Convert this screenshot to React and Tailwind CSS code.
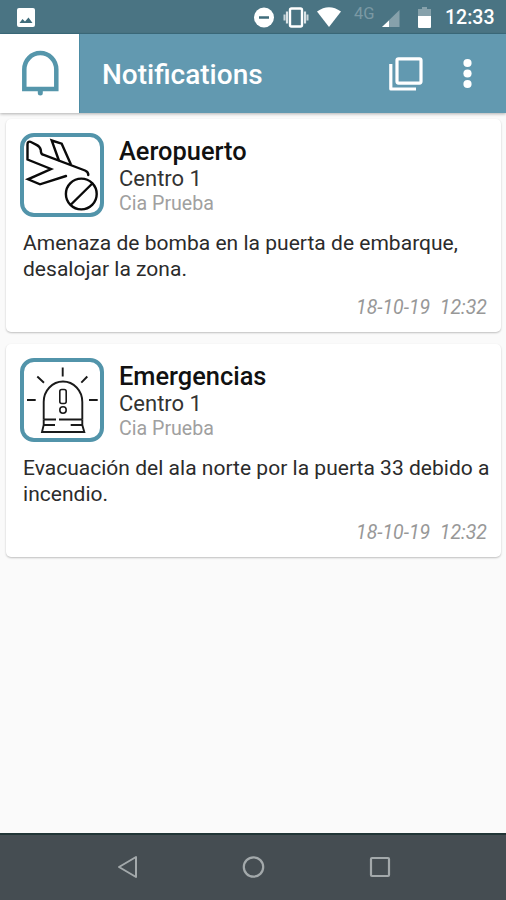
import React from "react";

const notifications = [
  {
    id: 1,
    title: "Aeropuerto",
    center: "Centro 1",
    company: "Cia Prueba",
    message: "Amenaza de bomba en la puerta de embarque, desalojar la zona.",
    date: "18-10-19",
    time: "12:32",
    Icon: PlaneIcon,
  },
  {
    id: 2,
    title: "Emergencias",
    center: "Centro 1",
    company: "Cia Prueba",
    message: "Evacuación del ala norte por la puerta 33 debido a incendio.",
    date: "18-10-19",
    time: "12:32",
    Icon: SirenIcon,
  },
];

function PlaneIcon() {
  return (
    <svg width="76" height="76" viewBox="0 0 76 76" fill="none" stroke="#0a0a0a" strokeWidth="2.4" strokeLinecap="round">
      <path d="M64.3 38 Q64.500 35 61 33.500 L18.500 17.500 Q16.800 17 16.800 13 Q16 9.500 12.500 7.800 L6.500 4.800 Q3.500 4 3.500 7.500 V22.500 L27 32 L4 42.300 L16 47.300 L42 39" />
      <path d="M34.700 23 L27.700 3.500 L37.700 6.700 L46.700 27" />
      <circle cx="57.300" cy="57" r="15.400" />
      <path d="M47 67.500 L68.300 46.500" />
    </svg>
  );
}

function SirenIcon() {
  return (
    <svg width="76" height="76" viewBox="0 0 76 76" fill="none" stroke="#1a1a1a" strokeWidth="1.900">
      <path d="M38.700 5.500 V14.500 M13.300 14.500 L20 20.700 M63.300 14.500 L57.300 20.700 M3 38 H11.700 M65 38 H73.700" />
      <path d="M19.700 57.500 V40 A19.300 20.500 0 0 1 58.300 40 V57.500" />
      <path d="M19.700 57.500 H32 M35 57.500 H58.300 M20 63 H31 M46.700 63 H59" />
      <path d="M19.700 57.500 V63 L18 70 H60.300 L58.300 63 V57.500" />
      <rect x="35.800" y="27.500" width="6.400" height="14" rx="2" strokeWidth="1.600" />
      <circle cx="39" cy="48" r="3.200" strokeWidth="1.600" />
    </svg>
  );
}

function StatusBar() {
  return (
    <div className="flex h-[34px] shrink-0 items-start border-b border-[#3d6d7e] bg-[#4a7483] pl-[17px] pr-[11px] text-white">
      <svg className="mt-2" width="18" height="19" viewBox="0 0 18 19">
        <rect width="18" height="19" rx="2" fill="#fff" />
        <path d="M2.500 15 L5.500 11 L8 13.500 L11.500 9.500 L15.500 15 Z" fill="#3f6c7b" />
      </svg>
      <div className="ml-auto flex items-start">
        <svg className="mt-[7px]" width="21" height="21" viewBox="0 0 21 21">
          <circle cx="10" cy="10.500" r="10" fill="#fff" />
          <path d="M5 10.500 H15" stroke="#3f6c7b" strokeWidth="2.500" />
        </svg>
        <svg className="ml-2 mt-[7px]" width="26" height="21" viewBox="0 0 26 21" fill="none" stroke="#fff">
          <rect x="7" y="1.500" width="12" height="18" rx="1.500" strokeWidth="2.400" />
          <path d="M4 4.500 V16.500 M22 4.500 V16.500" strokeWidth="2.200" opacity="0.800" />
          <path d="M1.500 7.500 V13.500 M24.500 7.500 V13.500" strokeWidth="2" opacity="0.700" />
        </svg>
        <svg className="ml-2 mt-[7px]" width="25" height="20" viewBox="0 0 25 20">
          <path d="M0 4.500 Q12 -4 24 4.500 L12 20 Z" fill="#fff" />
        </svg>
        <span className="ml-3 mt-[5px] w-[23px] text-[16.500px] leading-[18px] text-[#7b99a4]">4G</span>
        <svg className="ml-[5px] mt-[10px]" width="18" height="17" viewBox="0 0 18 17">
          <path d="M17.500 0 V17 H0 Z" fill="#86a1ab" />
          <path d="M7 10.400 V17 H0 Z" fill="#fff" />
        </svg>
        <svg className="ml-[18px] mt-[7px]" width="13" height="21" viewBox="0 0 13 21">
          <path d="M4 0 H9 V2 H13 V10 H0 V2 H4 Z" fill="#86a1ab" />
          <path d="M0 9 H13 V20 Q13 21 12 21 H1 Q0 21 0 20 Z" fill="#fff" />
        </svg>
        <span className="ml-[14px] mt-[6px] w-[50px] whitespace-nowrap text-[19.500px] font-medium leading-6">12:33</span>
      </div>
    </div>
  );
}

function Header() {
  return (
    <header className="relative z-10 flex h-[79px] shrink-0 items-center bg-[#6299b0] shadow-[0_1px_3px_rgba(0,0,0,0.3)]">
      <div className="flex h-full w-20 items-center justify-center border-r border-[#4d8ca4] bg-white">
        <svg width="38" height="47" viewBox="0 0 38 47" fill="none" stroke="#5596ab" strokeWidth="4.500">
          <path d="M3.300 39 V19.500 A16 16.500 0 0 1 35.300 19.500 V39 Z" />
          <path d="M19.300 40 V43" strokeWidth="5" strokeLinecap="round" />
        </svg>
      </div>
      <h1 className="ml-[22px] mt-[3px] whitespace-nowrap text-[28px] font-medium leading-8 text-white">Notifications</h1>
      <svg className="ml-auto" width="34" height="34" viewBox="0 0 34 34" fill="none" stroke="#fff" strokeWidth="3.200" strokeLinejoin="round">
        <rect x="8" y="1.800" width="24" height="24.300" rx="1.500" />
        <path d="M1.800 7 V32 H27" />
      </svg>
      <svg className="ml-10 mr-[34px]" width="9" height="31" viewBox="0 0 9 31" fill="#fff">
        <circle cx="4.500" cy="5" r="4.100" />
        <circle cx="4.500" cy="15.500" r="4.100" />
        <circle cx="4.500" cy="26" r="4.100" />
      </svg>
    </header>
  );
}

function NotificationCard({ item }) {
  const { Icon } = item;

  return (
    <article className="flex h-[213px] flex-col rounded-[5px] bg-white px-[14px] pt-[14px] shadow-[0_1px_2px_rgba(0,0,0,0.24)]">
      <div className="flex">
        <div className="flex h-[84px] w-[84px] shrink-0 items-center justify-center rounded-[14px] border-4 border-[#5294aa]">
          <Icon />
        </div>
        <div className="ml-[15px] whitespace-nowrap pt-[3px]">
          <h2 className="text-[25.400px] font-medium leading-[30px] text-[#111]">{item.title}</h2>
          <p className="text-[22px] leading-[26px] text-[#333]">{item.center}</p>
          <p className="text-[19.600px] leading-6 text-[#a0a0a0]">{item.company}</p>
        </div>
      </div>
      <p className="ml-[3px] mt-[14px] -mr-2 text-[21px] leading-[25.500px] tracking-[0.02px] text-[#2b2b2b]">{item.message}</p>
      <p className="mt-[14px] whitespace-pre text-right text-[19.500px] italic leading-6 text-[#989898]">
        {item.date}{"  "}{item.time}
      </p>
    </article>
  );
}

function NavBar() {
  return (
    <nav className="flex h-[67px] shrink-0 items-start justify-between border-t-2 border-[#213536] bg-[#454d52] pl-[116px] pr-[115px] pt-5">
      <svg width="22" height="24" viewBox="0 0 22 24" fill="none" stroke="#a3a9ab" strokeWidth="2" strokeLinejoin="round">
        <path d="M20 2 V22 L3 12 Z" />
      </svg>
      <svg width="24" height="24" viewBox="0 0 24 24" fill="none" stroke="#a3a9ab" strokeWidth="2.200">
        <circle cx="11.500" cy="12" r="9.700" />
      </svg>
      <svg width="22" height="24" viewBox="0 0 22 24" fill="none" stroke="#a3a9ab" strokeWidth="2.200">
        <rect x="2" y="3" width="18" height="18" rx="1" />
      </svg>
    </nav>
  );
}

export default function App() {
  return (
    <div className="flex h-[900px] w-[506px] flex-col overflow-hidden bg-[#fafafa] font-['Roboto',sans-serif]">
      <StatusBar />
      <Header />
      <main className="flex flex-1 flex-col gap-3 pl-[6px] pr-[5px] pt-[6px]">
        {notifications.map((item) => (
          <NotificationCard key={item.id} item={item} />
        ))}
      </main>
      <NavBar />
    </div>
  );
}
